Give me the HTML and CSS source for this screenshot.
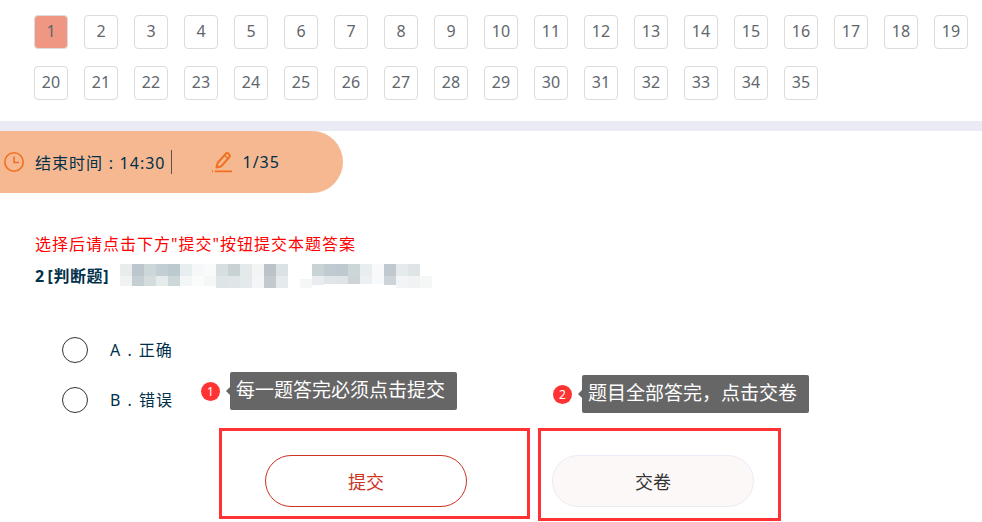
FILE: index.html
```html
<!DOCTYPE html>
<html lang="zh-CN">
<head>
    <meta charset="UTF-8">
    <title>答题</title>
    <link rel="stylesheet" href="styles.css">
</head>
<body>
    <div class="num-grid">
        <a class="num active">1</a><a class="num">2</a><a class="num">3</a><a class="num">4</a><a class="num">5</a>
        <a class="num">6</a><a class="num">7</a><a class="num">8</a><a class="num">9</a><a class="num">10</a>
        <a class="num">11</a><a class="num">12</a><a class="num">13</a><a class="num">14</a><a class="num">15</a>
        <a class="num">16</a><a class="num">17</a><a class="num">18</a><a class="num">19</a><a class="num">20</a>
        <a class="num">21</a><a class="num">22</a><a class="num">23</a><a class="num">24</a><a class="num">25</a>
        <a class="num">26</a><a class="num">27</a><a class="num">28</a><a class="num">29</a><a class="num">30</a>
        <a class="num">31</a><a class="num">32</a><a class="num">33</a><a class="num">34</a><a class="num">35</a>
    </div>

    <div class="status-bar">
        <svg class="clock" width="22" height="22" viewBox="0 0 22 22" fill="none" stroke="#f26f21" stroke-width="1.6">
            <circle cx="11" cy="11" r="9.2"/>
            <path d="M11 5.5V11.5H16"/>
        </svg>
        <span class="end-time">结束时间 : 14:30</span>
        <span class="sep"></span>
        <svg class="pen" width="22" height="22" viewBox="0 0 22 22" fill="none">
            <path d="M5.5 16.5L6.6 12L14.6 2.8C15.3 2 16.4 1.9 17.3 2.6L18.2 3.4C19 4.1 19.1 5.2 18.4 6L10.4 15.2Z" stroke="#f26f21" stroke-width="2" stroke-linejoin="round"/>
            <path d="M13.5 4.5L17.5 7.8" stroke="#f26f21" stroke-width="1.4"/>
            <path d="M1 20.4H2M3.8 20.4H21" stroke="#f26f21" stroke-width="1.8"/>
        </svg>
        <span class="progress">1/35</span>
    </div>

    <div class="question">
        <p class="hint">选择后请点击下方"提交"按钮提交本题答案</p>
        <div class="title">
            <b>2 [判断题]</b>
            <svg class="mosaic" width="312" height="24" viewBox="0 0 312 24">
                <g>
                    <rect x="0" y="0" width="12" height="12" fill="#e9eced"/><rect x="12" y="0" width="12" height="12" fill="#bcc7cd"/>
                    <rect x="24" y="0" width="12" height="12" fill="#cdd6d8"/><rect x="36" y="0" width="12" height="12" fill="#c2ced4"/>
                    <rect x="48" y="0" width="12" height="12" fill="#bcc9ce"/><rect x="60" y="0" width="12" height="12" fill="#e8edef"/>
                    <rect x="72" y="0" width="12" height="12" fill="#f5f7f8"/><rect x="84" y="0" width="12" height="12" fill="#f9fafa"/>
                    <rect x="96" y="0" width="12" height="12" fill="#d6dedf"/><rect x="108" y="0" width="12" height="12" fill="#c8d2d4"/>
                    <rect x="120" y="0" width="12" height="12" fill="#e4e9ec"/><rect x="132" y="0" width="12" height="12" fill="#f3f5f5"/>
                    <rect x="144" y="0" width="12" height="12" fill="#bcc3c8"/><rect x="156" y="0" width="12" height="12" fill="#dbe2e5"/>
                    <rect x="192" y="0" width="12" height="12" fill="#c9d3d6"/><rect x="204" y="0" width="12" height="12" fill="#bfcbd0"/>
                    <rect x="216" y="0" width="12" height="12" fill="#bdc9cf"/><rect x="228" y="0" width="12" height="12" fill="#ccd5d8"/>
                    <rect x="240" y="0" width="12" height="12" fill="#e8edf0"/><rect x="252" y="0" width="12" height="12" fill="#f8f9fa"/>
                    <rect x="264" y="0" width="12" height="12" fill="#bfc9cf"/><rect x="276" y="0" width="12" height="12" fill="#e6eaed"/>
                    <rect x="288" y="0" width="12" height="12" fill="#dfe5e6"/>
                </g>
                <g>
                    <rect x="0" y="12" width="12" height="10" fill="#f1f2f2"/><rect x="12" y="12" width="12" height="10" fill="#c5ced2"/>
                    <rect x="24" y="12" width="12" height="10" fill="#d5dcde"/><rect x="36" y="12" width="12" height="10" fill="#e5eaeb"/>
                    <rect x="48" y="12" width="12" height="10" fill="#cdd6d9"/><rect x="60" y="12" width="12" height="10" fill="#f3f6f7"/>
                    <rect x="72" y="12" width="12" height="10" fill="#fafbfb"/><rect x="84" y="12" width="12" height="10" fill="#f5f6f6"/>
                    <rect x="96" y="12" width="12" height="12" fill="#dee5e6"/><rect x="108" y="12" width="12" height="12" fill="#e0e6e8"/>
                    <rect x="120" y="12" width="12" height="12" fill="#e4e9ec"/><rect x="132" y="12" width="12" height="12" fill="#f3f5f6"/>
                    <rect x="144" y="12" width="12" height="12" fill="#c3c9cd"/><rect x="156" y="12" width="12" height="12" fill="#e5eaed"/>
                    <rect x="180" y="15" width="12" height="9" fill="#f5f6f6"/><rect x="192" y="12" width="12" height="9" fill="#e8ecee"/>
                    <rect x="204" y="12" width="12" height="8" fill="#e0e6e8"/><rect x="216" y="12" width="12" height="8" fill="#dfe5e7"/>
                    <rect x="228" y="12" width="12" height="8" fill="#ccd4d7"/><rect x="240" y="12" width="12" height="8" fill="#ecf0f2"/>
                    <rect x="252" y="12" width="12" height="8" fill="#f8f9fa"/><rect x="264" y="12" width="12" height="9" fill="#ccd4d9"/>
                    <rect x="276" y="12" width="12" height="12" fill="#f2f4f5"/><rect x="288" y="12" width="12" height="12" fill="#f0f2f3"/>
                    <rect x="300" y="12" width="12" height="12" fill="#f5f6f6"/>
                </g>
            </svg>
        </div>
    </div>

    <ul class="options">
        <li class="option"><span class="radio"></span><span class="opt-text">A . 正确</span></li>
        <li class="option"><span class="radio"></span><span class="opt-text">B . 错误</span></li>
    </ul>

    <div class="actions">
        <button class="btn btn-submit">提交</button>
        <button class="btn btn-hand">交卷</button>
    </div>

    <!-- annotations on top of the page -->
    <div class="note note-one"><span class="badge">1</span><span class="tip">每一题答完必须点击提交</span></div>
    <div class="note note-two"><span class="badge">2</span><span class="tip">题目全部答完，点击交卷</span></div>
    <div class="frame frame-one"></div>
    <div class="frame frame-two"></div>
</body>
</html>
```

FILE: styles.css
```css
body {
    margin: 0;
    position: relative;
    height: 522px;
    overflow: hidden;
    background: #fff;
    color: #00304a;
    font-family: "Noto Sans", "Noto Sans CJK SC", sans-serif;
}
.num-grid {
    display: grid;
    grid-template-columns: repeat(19, 34px);
    grid-auto-rows: 34px;
    column-gap: 16px;
    row-gap: 17px;
    padding: 15px 0 21px 34px;
    border-bottom: 10px solid #ebebf5;
}
.num {
    display: flex;
    align-items: center;
    justify-content: center;
    box-sizing: border-box;
    padding-bottom: 2px;
    border: 1px solid #dcdcdc;
    border-radius: 4px;
    font-size: 16px;
    color: #5f666c;
}
.num.active {
    background: #ef9783;
}
.status-bar {
    display: flex;
    align-items: center;
    box-sizing: border-box;
    width: 343px;
    height: 62px;
    padding: 0 0 1px 3px;
    background: #f5b890;
    border-radius: 0 31px 31px 0;
    font-size: 16px;
    letter-spacing: 1px;
}
.clock {
    margin-right: 10px;
}
.end-time {
    white-space: nowrap;
    word-spacing: .5px;
}
.sep {
    width: 1px;
    height: 24px;
    margin-left: 5px;
    background: #555;
}
.pen {
    margin-left: 39px;
    margin-right: 10px;
}
.question {
    padding: 40px 0 0 35px;
}
.hint {
    margin: 0;
    font-size: 16px;
    line-height: 22px;
    letter-spacing: 1px;
    color: #f00;
}
.title {
    display: flex;
    align-items: center;
    height: 24px;
    margin-top: 9px;
    font-size: 16px;
}
.title b {
    white-space: nowrap;
    width: 85px;
    padding-bottom: 3px;
    letter-spacing: .6px;
    word-spacing: -2px;
}
.options {
    list-style: none;
    margin: 0;
    padding: 49px 0 0 62px;
}
.option {
    display: flex;
    align-items: center;
    height: 26px;
    margin-bottom: 24px;
    font-size: 16px;
    letter-spacing: 1px;
}
.opt-text {
    padding-bottom: 2px;
    word-spacing: 1px;
}
.radio {
    box-sizing: border-box;
    width: 26px;
    height: 26px;
    margin-right: 22px;
    border: 1px solid #333;
    border-radius: 50%;
}
.actions {
    display: flex;
    gap: 85px;
    padding: 18px 0 0 265px;
}
.btn {
    width: 202px;
    height: 52px;
    border-radius: 26px;
    font-family: inherit;
    font-size: 18px;
}
.btn-submit {
    background: #fff;
    border: 1px solid #cc3322;
    color: #cc3322;
}
.btn-hand {
    background: #fdf8f8;
    border: 1px solid #ebebf5;
    color: #333;
}
.note {
    position: absolute;
    display: flex;
    align-items: center;
}
.note-one {
    left: 201px;
    top: 372px;
}
.note-two {
    left: 553px;
    top: 375px;
}
.badge {
    width: 19px;
    height: 19px;
    margin-right: 10px;
    border-radius: 50%;
    background: #ff3333;
    color: #fff;
    font-size: 12px;
    line-height: 19px;
    text-align: center;
}
.tip {
    position: relative;
    box-sizing: border-box;
    width: 227px;
    height: 38px;
    padding-left: 6px;
    background: #666;
    border-radius: 2px;
    color: #fff;
    font-size: 19px;
    line-height: 37px;
    white-space: nowrap;
}
.tip::before {
    content: "";
    position: absolute;
    left: -4px;
    top: 15px;
    border-style: solid;
    border-width: 4px 4px 4px 0;
    border-color: transparent #666 transparent transparent;
}
.frame {
    position: absolute;
    top: 428px;
    box-sizing: border-box;
    border: 3px solid #ff3333;
}
.frame-one {
    left: 219px;
    width: 311px;
    height: 91px;
}
.frame-two {
    left: 538px;
    width: 243px;
    height: 93px;
}
```
